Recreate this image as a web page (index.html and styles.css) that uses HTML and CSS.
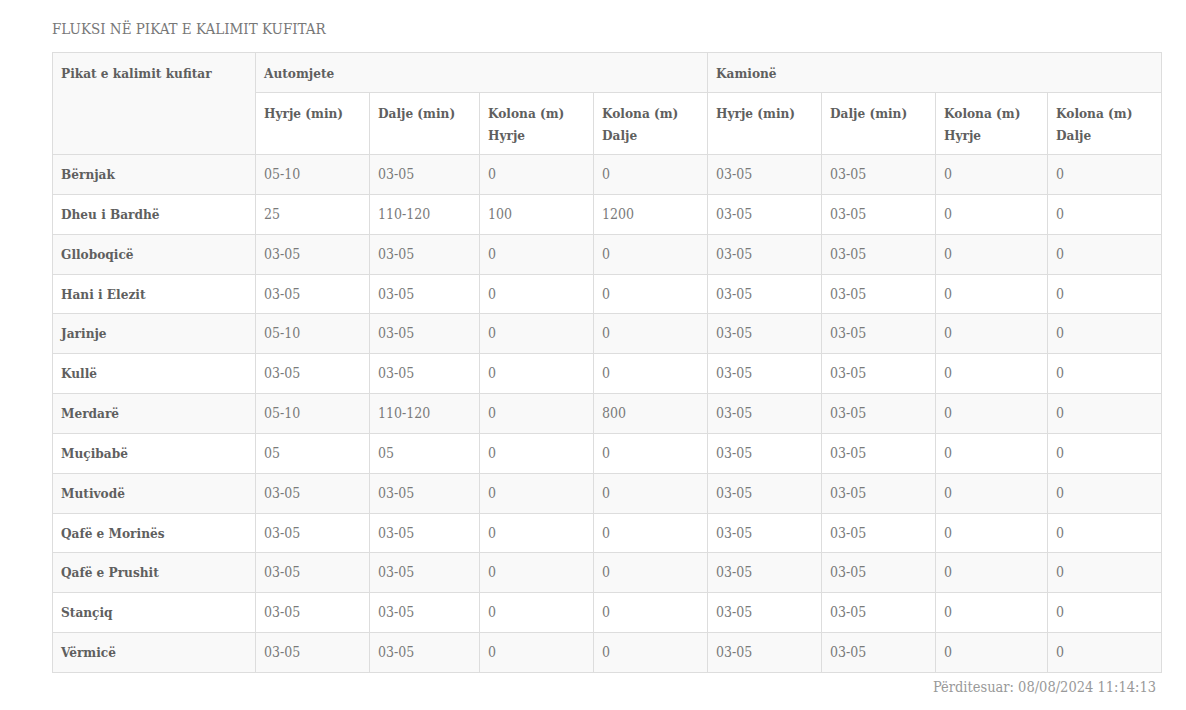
FILE: index.html
```html
<!DOCTYPE html>
<html lang="sq">
<head>
<meta charset="utf-8">
<title>Fluksi në pikat e kalimit kufitar</title>
<link rel="stylesheet" href="styles.css">
</head>
<body>
<main class="page">
  <h2 class="title">FLUKSI NË PIKAT E KALIMIT KUFITAR</h2>
  <table class="flux">
    <colgroup>
      <col class="c-name"><col class="c1"><col class="c2"><col class="c3"><col class="c4"><col class="c5"><col class="c6"><col class="c7"><col class="c8">
    </colgroup>
    <thead>
      <tr class="alt">
        <th rowspan="2">Pikat e kalimit kufitar</th>
        <th colspan="4">Automjete</th>
        <th colspan="4">Kamionë</th>
      </tr>
      <tr>
        <th>Hyrje (min)</th><th>Dalje (min)</th><th>Kolona (m)<br>Hyrje</th><th>Kolona (m)<br>Dalje</th>
        <th>Hyrje (min)</th><th>Dalje (min)</th><th>Kolona (m)<br>Hyrje</th><th>Kolona (m)<br>Dalje</th>
      </tr>
    </thead>
    <tbody>
      <tr class="alt"><th>Bërnjak</th><td>05-10</td><td>03-05</td><td>0</td><td>0</td><td>03-05</td><td>03-05</td><td>0</td><td>0</td></tr>
      <tr><th>Dheu i Bardhë</th><td>25</td><td>110-120</td><td>100</td><td>1200</td><td>03-05</td><td>03-05</td><td>0</td><td>0</td></tr>
      <tr class="alt"><th>Gllobоqicë</th><td>03-05</td><td>03-05</td><td>0</td><td>0</td><td>03-05</td><td>03-05</td><td>0</td><td>0</td></tr>
      <tr><th>Hani i Elezit</th><td>03-05</td><td>03-05</td><td>0</td><td>0</td><td>03-05</td><td>03-05</td><td>0</td><td>0</td></tr>
      <tr class="alt"><th>Jarinje</th><td>05-10</td><td>03-05</td><td>0</td><td>0</td><td>03-05</td><td>03-05</td><td>0</td><td>0</td></tr>
      <tr><th>Kullë</th><td>03-05</td><td>03-05</td><td>0</td><td>0</td><td>03-05</td><td>03-05</td><td>0</td><td>0</td></tr>
      <tr class="alt"><th>Merdarë</th><td>05-10</td><td>110-120</td><td>0</td><td>800</td><td>03-05</td><td>03-05</td><td>0</td><td>0</td></tr>
      <tr><th>Muçibabë</th><td>05</td><td>05</td><td>0</td><td>0</td><td>03-05</td><td>03-05</td><td>0</td><td>0</td></tr>
      <tr class="alt"><th>Mutivodë</th><td>03-05</td><td>03-05</td><td>0</td><td>0</td><td>03-05</td><td>03-05</td><td>0</td><td>0</td></tr>
      <tr><th>Qafë e Morinës</th><td>03-05</td><td>03-05</td><td>0</td><td>0</td><td>03-05</td><td>03-05</td><td>0</td><td>0</td></tr>
      <tr class="alt"><th>Qafë e Prushit</th><td>03-05</td><td>03-05</td><td>0</td><td>0</td><td>03-05</td><td>03-05</td><td>0</td><td>0</td></tr>
      <tr><th>Stançiq</th><td>03-05</td><td>03-05</td><td>0</td><td>0</td><td>03-05</td><td>03-05</td><td>0</td><td>0</td></tr>
      <tr class="alt"><th>Vërmicë</th><td>03-05</td><td>03-05</td><td>0</td><td>0</td><td>03-05</td><td>03-05</td><td>0</td><td>0</td></tr>
    </tbody>
  </table>
  <p class="updated">Përditesuar: 08/08/2024 11:14:13</p>
</main>
</body>
</html>
```

FILE: styles.css
```css
html, body {
  margin: 0;
  padding: 0;
  background: #fff;
}

body {
  font-family: "DejaVu Serif Condensed", "DejaVu Serif", serif;
  font-stretch: condensed;
  color: #707070;
}

.page {
  width: 1109px;
  padding: 19px 0 0 52px;
}

.title {
  margin: 0 0 13px 0;
  font-size: 15px;
  line-height: 20px;
  font-weight: normal;
  color: #777;
}

.flux {
  width: 1109px;
  table-layout: fixed;
  border-collapse: collapse;
  font-size: 13.5px;
  line-height: 22px;
}

.flux tbody {
  line-height: 21.85px;
}

.c-name { width: 203px; }
.c1 { width: 114px; }
.c2 { width: 110px; }
.c3 { width: 114px; }
.c4 { width: 114px; }
.c5 { width: 114px; }
.c6 { width: 114px; }
.c7 { width: 112px; }
.c8 { width: 114px; }

.flux th,
.flux td {
  border: 1px solid #ddd;
  padding: 9px 8px 8px 8px;
  text-align: left;
  vertical-align: top;
}

.flux th {
  font-weight: bold;
  color: #5f5f5f;
}

.flux td {
  font-size: 14px;
  color: #7a7a7a;
  font-weight: normal;
}

.flux tr.alt {
  background: #f9f9f9;
}

.updated {
  margin: 5px 0 0 0;
  text-align: right;
  padding-right: 5px;
  font-size: 14.5px;
  line-height: 18px;
  color: #999;
}
```
